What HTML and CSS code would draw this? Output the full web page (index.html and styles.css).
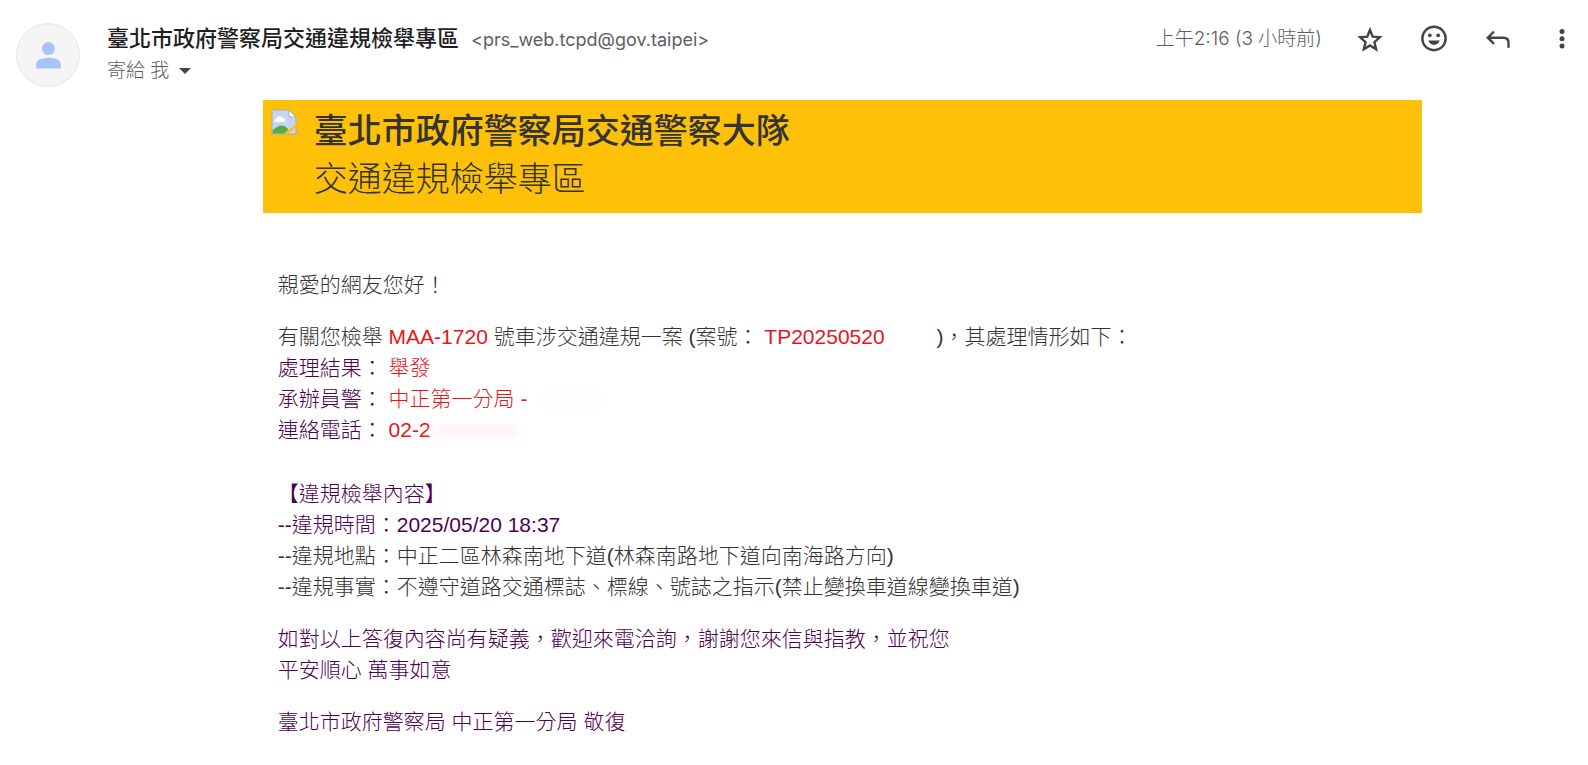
FILE: index.html
```html
<!DOCTYPE html>
<html lang="zh-Hant">
<head>
  <meta charset="UTF-8" />
  <meta name="viewport" content="width=device-width, initial-scale=1.0" />
  <title>臺北市政府警察局交通違規檢舉專區</title>
  <link rel="stylesheet" href="styles.css">
</head>
<body>

  <article class="mail">

    <!-- Sender row -->
    <header class="mail-header">
      <div class="avatar">
        <svg viewBox="0 0 24 24" width="37" height="37" aria-hidden="true">
          <circle cx="12" cy="7.500" r="4.200" />
          <path d="M12 13.500c-4 0-8 1.300-8 4.500v2.500h16v-2.500c0-3.200-4-4.500-8-4.500z" />
        </svg>
      </div>

      <div class="sender">
        <div class="sender-line">
          <span class="sender-name">臺北市政府警察局交通違規檢舉專區</span>
          <span class="sender-address">&lt;prs_web.tcpd@gov.taipei&gt;</span>
        </div>
        <button type="button" class="recipient">
          寄給 我
          <svg viewBox="0 0 12 6" width="12" height="6" aria-hidden="true"><path d="M0 0h12L6 6z" /></svg>
        </button>
      </div>

      <time class="sent-at">上午2:16 (3 小時前)</time>

      <div class="actions">
        <button type="button" class="icon-button" aria-label="加上星號">
          <svg viewBox="0 0 32 32"><path d="M16 7l2.700 6.700 7.200.6-5.500 4.800 1.700 7.200-6.100-3.800-6.100 3.800 1.700-7.200L6.100 14.300l7.200-.6z" /></svg>
        </button>
        <button type="button" class="icon-button" aria-label="新增回應">
          <svg viewBox="0 0 32 32">
            <circle cx="16" cy="15.500" r="11.700" />
            <circle class="fill" cx="11.800" cy="12.300" r="1.900" />
            <circle class="fill" cx="20.200" cy="12.300" r="1.900" />
            <path class="fill" d="M10.200 17.600h11.600c-.9 2.700-3.200 4.300-5.800 4.300s-4.900-1.600-5.800-4.300z" />
          </svg>
        </button>
        <button type="button" class="icon-button" aria-label="回覆">
          <svg viewBox="0 0 32 32"><path d="M12 8.500L5.800 14.700l6.200 6.200M6 14.700h15.500c3 0 5 2 5 5v5" /></svg>
        </button>
        <button type="button" class="icon-button" aria-label="更多">
          <svg viewBox="0 0 32 32">
            <circle class="fill" cx="16" cy="8.500" r="2.500" />
            <circle class="fill" cx="16" cy="15.700" r="2.500" />
            <circle class="fill" cx="16" cy="23" r="2.500" />
          </svg>
        </button>
      </div>
    </header>

    <!-- Message -->
    <div class="message">
      <div class="banner">
        <svg class="broken-image" viewBox="0 0 26 26" width="26" height="26" aria-hidden="true">
          <path fill="#c5d6f4" stroke="#a3a9b3" d="M1 1h17l7 7v17H1z" />
          <path fill="#fff" d="M5 10c0-3 5-4 6-1 3-1 4 3 2 4H5c-2 0-2-3 0-3z" />
          <path fill="#55ab3d" d="M1.500 24.500v-3c3-3 6-5 9-5s5 2 7 4l-4 4z" />
          <path fill="#fff" stroke="#a3a9b3" d="M18 1v7h7z" />
          <path fill="#ffc107" d="M26 14v3l-9 8h-4z" />
        </svg>
        <div class="banner-text">
          <h1>臺北市政府警察局交通警察大隊</h1>
          <h2>交通違規檢舉專區</h2>
        </div>
      </div>

      <div class="content">
        <p>親愛的網友您好！</p>

        <p>
          有關您檢舉 <span class="red">MAA-1720</span> 號車涉交通違規一案 (案號： <span class="red">TP20250520</span><span class="hidden-number"></span>)，其處理情形如下：<br>
          <span class="purple">處理結果：</span> <span class="red">舉發</span><br>
          <span class="purple">承辦員警：</span> <span class="red">中正第一分局 -</span><span class="smudge smudge-name"></span><br>
          <span class="purple">連絡電話：</span> <span class="red">02-2</span><span class="smudge smudge-phone"></span>
        </p>

        <p class="report">
          <span class="purple">【違規檢舉內容】</span><br>
          <span class="purple">--違規時間：2025/05/20 18:37</span><br>
          --違規地點：中正二區林森南地下道(林森南路地下道向南海路方向)<br>
          --違規事實：不遵守道路交通標誌、標線、號誌之指示(禁止變換車道線變換車道)
        </p>

        <p class="purple">
          如對以上答復內容尚有疑義，歡迎來電洽詢，謝謝您來信與指教，並祝您<br>
          平安順心 萬事如意
        </p>

        <p class="purple">臺北市政府警察局 中正第一分局 敬復</p>
      </div>
    </div>

  </article>

</body>
</html>
```
FILE: styles.css
```css
* {
  margin: 0;
  padding: 0;
  box-sizing: border-box;
}

body {
  background-color: #fff;
  color: #333;
  font-family: "Liberation Sans", "Noto Sans CJK TC", sans-serif;
}

button {
  background: none;
  border: none;
  color: inherit;
  font: inherit;
  cursor: pointer;
}

/* === HEADER === */
.mail-header {
  display: flex;
  align-items: flex-start;
  padding: 23px 10px 0 16px;
  font-family: Inter, "Noto Sans CJK TC", sans-serif;
  color: #5e5e5e;
}

.avatar {
  display: flex;
  justify-content: center;
  align-items: center;
  width: 64px;
  height: 64px;
  margin-right: 27px;
  border: 1px solid #e6e6e6;
  border-radius: 50%;
  background-color: #f5f5f5;
}

.avatar svg {
  fill: #a8c4f5;
}

.sender {
  flex: 1;
}

.sender-line {
  display: flex;
  align-items: baseline;
  gap: 12px;
  line-height: 31px;
}

.sender-name {
  color: #1f1f1f;
  font-size: 22px;
  font-weight: 500;
}

.sender-address {
  font-size: 18px;
}

.recipient {
  display: flex;
  align-items: center;
  gap: 10px;
  font-size: 19px;
  font-weight: 300;
  line-height: 31px;
}

.recipient svg {
  fill: #444;
}

.sent-at {
  margin-right: 32px;
  font-size: 19px;
  font-weight: 300;
  line-height: 31px;
}

.actions {
  display: flex;
  gap: 32px;
}

.icon-button {
  width: 32px;
  height: 32px;
}

.icon-button svg {
  display: block;
  fill: none;
  stroke: #444;
  stroke-width: 2.4;
}

.icon-button .fill {
  fill: #444;
  stroke: none;
}

/* === MESSAGE === */
.message {
  width: 73%;
  margin: 13px 166px 0 auto;
}

.banner {
  display: flex;
  gap: 17px;
  padding: 7px 8px 10px;
  background-color: #ffc107;
}

.broken-image {
  margin-top: 2px;
}

.banner h1,
.banner h2 {
  font-size: 34px;
  line-height: 48px;
}

.banner h1 {
  font-weight: 500;
}

.banner h2 {
  font-weight: 300;
}

.content {
  padding: 56px 15px 0;
  font-size: 21px;
  font-weight: 300;
  line-height: 31px;
}

.content p {
  margin-bottom: 21px;
}

.content .report {
  margin-top: 33px;
}

.red {
  color: #e8141c;
}

.purple {
  color: #500050;
}

.hidden-number {
  display: inline-block;
  width: 52px;
}

.smudge {
  display: inline-block;
  height: 12px;
  border-radius: 6px;
  vertical-align: middle;
  filter: blur(5px);
}

.smudge-name {
  width: 64px;
  margin-left: 12px;
  background-color: #fefafa;
}

.smudge-phone {
  width: 88px;
  background-color: #fff4f4;
}
```
